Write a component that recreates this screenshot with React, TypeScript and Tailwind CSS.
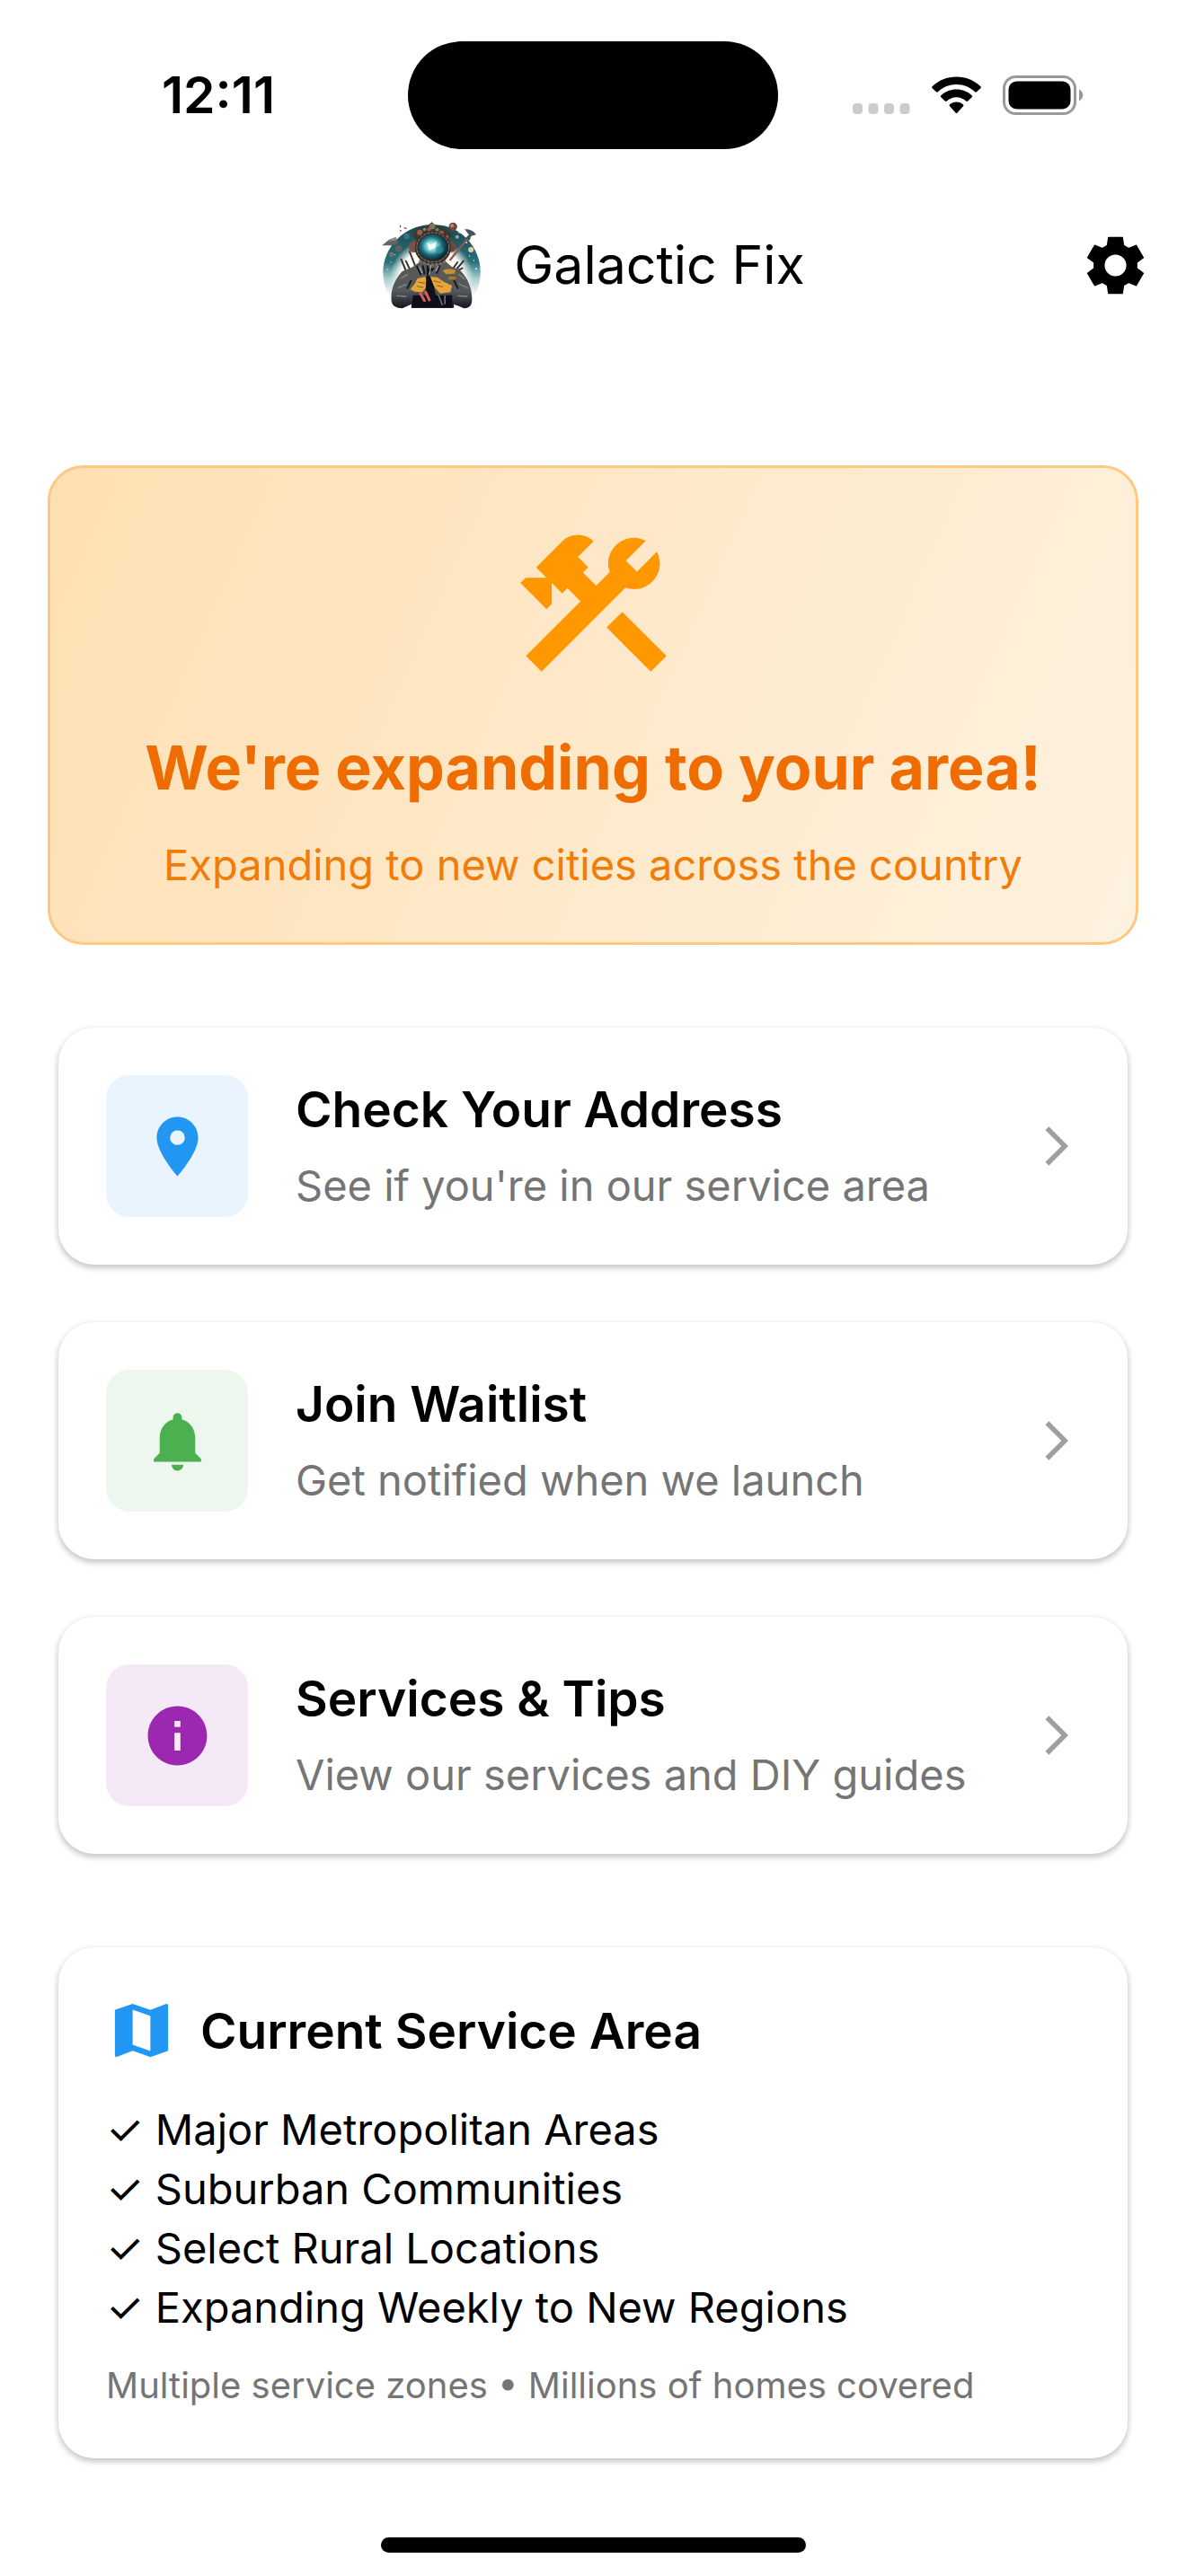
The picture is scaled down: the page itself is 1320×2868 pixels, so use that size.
import type { IconType } from "react-icons";
import {
  MdArrowForwardIos,
  MdConstruction,
  MdInfo,
  MdLocationOn,
  MdMap,
  MdNotifications
} from "react-icons/md";

type ActionType = {
  title: string;
  subtitle: string;
  icon: IconType;
  tileClass: string;
};

const actions: ActionType[] = [
  {
    title: "Check Your Address",
    subtitle: "See if you're in our service area",
    icon: MdLocationOn,
    tileClass: "bg-[#e9f4fe] text-[#2196f3]"
  },
  {
    title: "Join Waitlist",
    subtitle: "Get notified when we launch",
    icon: MdNotifications,
    tileClass: "bg-[#edf7ee] text-[#4caf50]"
  },
  {
    title: "Services & Tips",
    subtitle: "View our services and DIY guides",
    icon: MdInfo,
    tileClass: "bg-[#f5e9f7] text-[#9c27b0]"
  }
];

const areas = [
  "Major Metropolitan Areas",
  "Suburban Communities",
  "Select Rural Locations",
  "Expanding Weekly to New Regions"
];

export default function App() {
  return (
    <div className="w-full min-h-screen flex flex-col bg-white text-black font-['Inter',sans-serif]">
      <StatusBar />
      <AppHeader />

      <main className="flex flex-col px-[53px] pt-[153px]">
        <ExpansionBanner />

        <div className="flex flex-col gap-16 px-3 pt-[92px]">
          {actions.map((action) => (
            <ActionCard {...action} key={action.title} />
          ))}
        </div>

        <div className="px-3 pt-[104px]">
          <ServiceArea />
        </div>
      </main>

      <div className="mt-[88px] mb-[26px] mx-auto w-[473px] h-[17px] rounded-full bg-black" />
    </div>
  );
}

const StatusBar = () => {
  return (
    <div className="grid grid-cols-[1fr_auto_1fr] items-center pt-[46px]">
      <span className="text-center pl-8 text-[57px] leading-[60px] font-semibold">
        12:11
      </span>
      <div className="w-[412px] h-[120px] rounded-full bg-black" />
      <div className="flex items-center justify-center gap-6 pr-8">
        <svg width="64" height="42" viewBox="0 0 64 42" fill="#cccccc">
          <rect x="0" y="30" width="11" height="12" rx="4" />
          <rect x="17.5" y="30" width="11" height="12" rx="4" />
          <rect x="35" y="30" width="11" height="12" rx="4" />
          <rect x="52.5" y="30" width="11" height="12" rx="4" />
        </svg>
        <svg width="55" height="42" viewBox="0 0 55 42" fill="#000">
          <path d="M27.5 0.5C37.8 0.5 47.3 4.4 54.4 11.2Q55.3 12.2 54.4 13.2L50 17.3Q49 18.1 48 17.2C42.5 12 35.3 9.1 27.5 9.1S12.5 12 7 17.2Q6 18.1 5 17.3L0.6 13.2Q-0.3 12.2 0.6 11.2C7.7 4.4 17.2 0.5 27.5 0.5Z" />
          <path d="M27.5 14.5C34 14.5 40 16.9 44.7 21.2Q45.7 22.2 44.7 23.2L40.2 27.5Q39.2 28.3 38.2 27.5C35.3 24.9 31.6 23.3 27.5 23.3S19.7 24.9 16.8 27.5Q15.8 28.3 14.8 27.5L10.3 23.2Q9.3 22.2 10.3 21.2C15 16.9 21 14.5 27.5 14.5Z" />
          <path d="M27.5 28.5C30.4 28.5 33 29.6 35 31.3Q36 32.2 35 33.2L28.5 40.6Q27.5 41.6 26.5 40.6L20 33.2Q19 32.2 20 31.3C22 29.6 24.6 28.5 27.5 28.5Z" />
        </svg>
        <svg width="90" height="44" viewBox="0 0 90 44">
          <rect x="1.5" y="1.5" width="79" height="41" rx="13" fill="none" stroke="#999999" strokeWidth="3" />
          <rect x="6.5" y="6.5" width="69" height="31" rx="9" fill="#000" />
          <path d="M85 15.5C87.7 16.7 89.3 19.2 89.3 22S87.7 27.3 85 28.5Z" fill="#999999" />
        </svg>
      </div>
    </div>
  );
};

const AppHeader = () => {
  return (
    <header className="grid grid-cols-[1fr_auto_1fr] items-center pt-[59px] pr-[39px]">
      <span className="w-10" />
      <div className="flex items-center gap-9 pl-10 h-[140px]">
        <AstronautLogo />
        <h1 className="text-[59px] leading-[72px]">Galactic Fix</h1>
      </div>
      <button type="button" aria-label="Settings" className="justify-self-end">
        <svg width="79" height="79" viewBox="-118 -118 236 236">
          <path
            d="M-27 -66L-23 -93H23L27 -66L43.7 -56.4L69 -66.5L92.5 -26L70.7 -9.6V9.6L92.5 26L69 66.5L43.7 56.4L27 66L23 93H-23L-27 66L-43.7 56.4L-69 66.5L-92.5 26L-70.7 9.6V-9.6L-92.5 -26L-69 -66.5L-43.7 -56.4ZM0 -38A38 38 0 1 0 0 38A38 38 0 1 0 0 -38Z"
            fillRule="evenodd"
            stroke="#000"
            strokeWidth="4"
            strokeLinejoin="round"
          />
        </svg>
      </button>
    </header>
  );
};

const ExpansionBanner = () => {
  return (
    <section className="rounded-[40px] border-[3px] border-[#fdc980] bg-linear-[114deg] from-[#ffdfb2] to-[#fdf2e0] flex flex-col items-center text-center py-[53px]">
      <MdConstruction size={197} color="#ff9800" />
      <h2 className="text-[68px] leading-[88px] font-bold text-[#ef6c00] pt-[39px]">
        We're expanding to your area!
      </h2>
      <p className="text-[47px] leading-[66px] text-[#f07d0a] pt-8">
        Expanding to new cities across the country
      </p>
    </section>
  );
};

const ActionCard = ({ title, subtitle, icon: Icon, tileClass }: ActionType) => {
  return (
    <button
      type="button"
      className="w-full rounded-[40px] bg-white p-[53px] flex items-center text-left shadow-[0_3px_6px_1px_#00000038]"
    >
      <span
        className={`size-[158px] shrink-0 rounded-[26px] flex items-center justify-center ${tileClass}`}
      >
        <Icon size={79} />
      </span>
      <span className="flex flex-col gap-4 grow pl-[53px]">
        <span className="text-[55px] leading-[72px] font-semibold">
          {title}
        </span>
        <span className="text-[47px] leading-[66px] text-[#757575]">
          {subtitle}
        </span>
      </span>
      <MdArrowForwardIos size={52} color="#9e9e9e" />
    </button>
  );
};

const ServiceArea = () => {
  return (
    <section className="rounded-[40px] bg-white p-[53px] shadow-[0_3px_6px_1px_#00000038]">
      <div className="flex items-center gap-[26px]">
        <MdMap size={79} color="#2196f3" />
        <h2 className="text-[55px] leading-[72px] font-semibold">
          Current Service Area
        </h2>
      </div>
      <ul className="pt-[38px] text-[47px] leading-[66px]">
        {areas.map((area) => (
          <li key={area}>✓ {area}</li>
        ))}
      </ul>
      <p className="pt-[26px] text-[40px] leading-[56px] text-[#757575]">
        Multiple service zones • Millions of homes covered
      </p>
    </section>
  );
};

const AstronautLogo = () => {
  return (
    <svg
      width="111"
      height="98"
      viewBox="48 48 332 294"
      role="img"
      aria-label="Galactic Fix logo"
    >
      <defs>
        <linearGradient id="sky" x1="0" y1="0" x2="0" y2="1">
          <stop offset="0" stopColor="#1d4650" />
          <stop offset="0.5" stopColor="#28707a" />
          <stop offset="0.72" stopColor="#a9cdd0" />
          <stop offset="0.95" stopColor="#ffffff" />
        </linearGradient>
        <radialGradient id="glow" cx="0.5" cy="0.55" r="0.5">
          <stop offset="0.75" stopColor="#fffdf3" />
          <stop offset="1" stopColor="#fffdf3" stopOpacity="0" />
        </radialGradient>
        <radialGradient id="visor" cx="0.45" cy="0.45" r="0.6">
          <stop offset="0" stopColor="#f2fff9" />
          <stop offset="0.3" stopColor="#7fd6d4" />
          <stop offset="0.6" stopColor="#1a6b77" />
          <stop offset="1" stopColor="#06151c" />
        </radialGradient>
        <linearGradient id="suit" x1="0" y1="0" x2="0" y2="1">
          <stop offset="0" stopColor="#5c5b56" />
          <stop offset="0.65" stopColor="#54585a" />
          <stop offset="1" stopColor="#14151f" />
        </linearGradient>
      </defs>
      <path d="M52 230C46 150 110 62 215 60S384 150 376 230C374 265 362 290 350 310H80C66 290 54 265 52 230Z" fill="url(#sky)" />
      <ellipse cx="214" cy="225" rx="140" ry="130" fill="url(#glow)" />
      <g fill="#d9efed">
        <circle cx="78" cy="185" r="2" />
        <circle cx="92" cy="160" r="2" />
        <circle cx="66" cy="210" r="2" />
        <circle cx="330" cy="120" r="3" />
        <circle cx="355" cy="180" r="2" />
        <circle cx="362" cy="208" r="3" />
        <circle cx="340" cy="165" r="2" />
        <circle cx="305" cy="88" r="2" />
      </g>
      <path d="M48 130L72 110L94 102L104 120L94 130Z" fill="#59646a" />
      <path d="M66 116L94 102L98 112Z" fill="#a28d83" />
      <circle cx="130" cy="99" r="10" fill="#3e6f88" />
      <circle cx="104" cy="140" r="11" fill="#5d6263" />
      <circle cx="80" cy="160" r="8" fill="#75716a" />
      <circle cx="285" cy="67" r="14" fill="#70483a" />
      <circle cx="282" cy="64" r="6" fill="#b98a6c" />
      <circle cx="345" cy="144" r="9" fill="#d9cfae" />
      <circle cx="299" cy="101" r="6" fill="#9ba7a3" />
      <path d="M109 62v8M110 78v5M122 70l8 4" stroke="#6e5249" strokeWidth="4" />
      <path d="M150 92L170 72L198 66L214 52L232 66L262 76L284 98L262 112H160Z" fill="#3b3a32" />
      <g fill="#a75b47">
        <circle cx="174" cy="86" r="9" />
        <circle cx="205" cy="76" r="6" />
        <circle cx="246" cy="88" r="8" />
        <circle cx="264" cy="101" r="6" />
      </g>
      <circle cx="216" cy="66" r="10" fill="#827656" />
      <circle cx="190" cy="76" r="5" fill="#819490" />
      <circle cx="232" cy="77" r="6" fill="#6e7f7c" />
      <path d="M274 180L336 104" stroke="#8b5c50" strokeWidth="7" />
      <path d="M324 76C340 74 356 82 362 94L346 98L340 114L326 106L338 94Z" fill="#48545b" />
      <path d="M112 176l14 34M128 182l14 30M140 150l18 46M300 186l-18 26M320 182l-24 28M316 206l-20 10" stroke="#34343a" strokeWidth="6" strokeLinecap="round" />
      <path d="M80 318C74 280 92 240 116 216L150 202L184 178H254L280 200L308 212C332 234 352 276 348 318Q346 340 322 340L288 326V338H146V326L116 340Q84 340 80 318Z" fill="url(#suit)" />
      <path d="M112 240l22-14M100 272l30-12M96 298l34 2M304 226l20 16M304 258l32 14M300 298l34 2" stroke="#85898a" strokeWidth="4" />
      <path d="M146 246L132 274M288 246L302 274" stroke="#17181d" strokeWidth="6" />
      <path d="M152 296H282V338H146Z" fill="#0d0d1b" />
      <path d="M164 198l14 30M184 196l6 30M200 196v34M222 208h-22v20M242 196l-12 28" stroke="#15191f" strokeWidth="6" />
      <path d="M172 200l10 22M212 194l-6 32M236 198l-8 18" stroke="#a5aca8" strokeWidth="4" />
      <circle cx="156" cy="134" r="19" fill="#7d5141" />
      <circle cx="279" cy="134" r="18" fill="#6b493d" />
      <ellipse cx="218" cy="138" rx="60" ry="56" fill="#33312f" />
      <ellipse cx="218" cy="136" rx="54" ry="49" fill="none" stroke="#a47d72" strokeWidth="3" strokeDasharray="9 4" />
      <ellipse cx="219" cy="136" rx="49" ry="43" fill="url(#visor)" />
      <circle cx="240" cy="144" r="13" fill="#2b8f98" opacity="0.7" />
      <path d="M198 120l14 8l18-12l-6 22l-18 8Z" fill="#f5fff8" />
      <path d="M172 180Q218 208 266 180" fill="none" stroke="#75716e" strokeWidth="8" strokeDasharray="9 5" />
      <path d="M250 214Q262 204 294 212L290 224L262 226Z" fill="#c89036" />
      <path d="M270 234h24v10h-24Z" fill="#a87a31" />
      <path d="M192 234L166 240L158 258L142 276L158 284L182 286L194 272L198 248Z" fill="#e6a63b" />
      <path d="M208 234L232 236L256 252L282 264L276 286L242 290L222 268L210 250Z" fill="#e6a63b" />
      <path d="M168 252l24 4M164 266l22 4M220 248l24 6M230 264l22 4" stroke="#8a5a20" strokeWidth="3" />
      <path d="M196 232H208L222 268L232 318H196L194 276Z" fill="#111217" />
      <path d="M176 290L190 314M194 286L206 312" stroke="#dd5a57" strokeWidth="9" strokeLinecap="round" />
      <path d="M236 294L250 330M258 296v30" stroke="#6c7179" strokeWidth="5" />
    </svg>
  );
};
